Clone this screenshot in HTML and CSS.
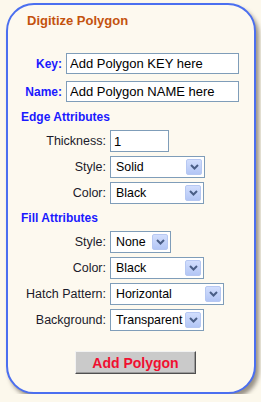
FILE: index.html
```html
<!DOCTYPE html>
<html lang="en">
<head>
<meta charset="UTF-8">
<meta name="viewport" content="width=device-width, initial-scale=1.0">
<link rel="stylesheet" href="styles.css">
</head>
<body>
  <div class="panel">
    <div class="title">Digitize Polygon</div>

    <!-- key / name -->
    <div class="key-grid">
      <label class="key-label">Key:</label>
      <input class="text-input wide" type="text" value="Add Polygon KEY here">
      <label class="key-label">Name:</label>
      <input class="text-input wide" type="text" value="Add Polygon NAME here">
    </div>

    <div class="section-head edge-head">Edge Attributes</div>
    <div class="attr-grid">
      <label class="attr-label">Thickness:</label>
      <input class="text-input thick" type="text" value="1">

      <label class="attr-label">Style:</label>
      <div class="select w-95">
        <span class="select-text">Solid</span>
        <span class="select-arrow"><svg width="9" height="6" viewBox="0 0 9 6"><path d="M1 1 L4.5 4.5 L8 1" fill="none" stroke="#4a5e86" stroke-width="2"/></svg></span>
      </div>

      <label class="attr-label">Color:</label>
      <div class="select w-94">
        <span class="select-text">Black</span>
        <span class="select-arrow"><svg width="9" height="6" viewBox="0 0 9 6"><path d="M1 1 L4.5 4.5 L8 1" fill="none" stroke="#4a5e86" stroke-width="2"/></svg></span>
      </div>
    </div>

    <div class="section-head fill-head">Fill Attributes</div>
    <div class="attr-grid">
      <label class="attr-label">Style:</label>
      <div class="select w-61">
        <span class="select-text">None</span>
        <span class="select-arrow"><svg width="9" height="6" viewBox="0 0 9 6"><path d="M1 1 L4.5 4.5 L8 1" fill="none" stroke="#4a5e86" stroke-width="2"/></svg></span>
      </div>

      <label class="attr-label">Color:</label>
      <div class="select w-94">
        <span class="select-text">Black</span>
        <span class="select-arrow"><svg width="9" height="6" viewBox="0 0 9 6"><path d="M1 1 L4.5 4.5 L8 1" fill="none" stroke="#4a5e86" stroke-width="2"/></svg></span>
      </div>

      <label class="attr-label">Hatch Pattern:</label>
      <div class="select w-114">
        <span class="select-text">Horizontal</span>
        <span class="select-arrow"><svg width="9" height="6" viewBox="0 0 9 6"><path d="M1 1 L4.5 4.5 L8 1" fill="none" stroke="#4a5e86" stroke-width="2"/></svg></span>
      </div>

      <label class="attr-label">Background:</label>
      <div class="select w-94">
        <span class="select-text">Transparent</span>
        <span class="select-arrow"><svg width="9" height="6" viewBox="0 0 9 6"><path d="M1 1 L4.5 4.5 L8 1" fill="none" stroke="#4a5e86" stroke-width="2"/></svg></span>
      </div>
    </div>

    <button class="add-btn">Add Polygon</button>
  </div>
</body>
</html>
```

FILE: styles.css
```css
body {
  margin: 0;
  background: #fcf8ec;
  font-family: "Liberation Sans", Arial, sans-serif;
}

/* rounded card */
.panel {
  width: 246px;
  height: 387px;
  margin: 3px 0 0 6px;
  border: 2px solid #4b6ff0;
  border-radius: 28px;
  background: #fdf9ef;
  box-shadow: 3px 4px 4px rgba(70, 60, 50, 0.55);
}

.title {
  margin: 8px 0 0 19px;
  font-size: 13px;
  line-height: 16px;
  font-weight: bold;
  color: #c4520e;
}

.key-grid {
  display: grid;
  grid-template-columns: 54px 173px;
  column-gap: 4px;
  row-gap: 7px;
  margin-top: 24px;
}

.key-label {
  align-self: center;
  text-align: right;
  font-size: 12px;
  font-weight: bold;
  color: #1a1aff;
}

.section-head {
  padding-left: 13px;
  font-size: 12px;
  line-height: 15px;
  font-weight: bold;
  color: #1a1aff;
}
.edge-head {
  margin: 8px 0 5px;
}
.fill-head {
  margin: 7px 0 5px;
}

.attr-grid {
  display: grid;
  grid-template-columns: 98px auto;
  column-gap: 4px;
  row-gap: 4px;
  justify-items: start;
}

.attr-label {
  justify-self: end;
  align-self: center;
  font-size: 12.5px;
  color: #1b1b2b;
}

.text-input {
  box-sizing: border-box;
  height: 21px;
  margin: 0;
  padding: 0 3px;
  border: 1px solid #7f9db9;
  background: #fff;
  font-family: "Liberation Sans", Arial, sans-serif;
  font-size: 13px;
  color: #000;
  outline: none;
}
.wide {
  width: 173px;
}
.thick {
  width: 59px;
  height: 22px;
}

/* XP style dropdowns */
.select {
  box-sizing: border-box;
  display: flex;
  align-items: center;
  height: 22px;
  padding: 2px;
  border: 1px solid #7f9db9;
  background: #fff;
}
.w-61 { width: 61px; }
.w-94 { width: 94px; }
.w-95 { width: 95px; }
.w-114 { width: 114px; }

.select-text {
  flex: 1;
  overflow: hidden;
  padding-left: 3px;
  font-size: 12.4px;
  color: #000;
  white-space: nowrap;
}

.select-arrow {
  box-sizing: border-box;
  display: flex;
  flex: none;
  align-items: center;
  justify-content: center;
  width: 16px;
  height: 16px;
  border: 1px solid #b7c8f2;
  border-radius: 2px;
  background: linear-gradient(#d2defd, #b3c6f5);
}

.add-btn {
  box-sizing: border-box;
  display: block;
  width: 121px;
  height: 23px;
  margin: 20px 0 0 67px;
  padding: 0;
  border: 1px solid;
  border-color: #f2f2f2 #505050 #505050 #f2f2f2;
  box-shadow: inset -1px -1px 0 #9a9a9a;
  background: #cacaca;
  font-family: "Liberation Sans", Arial, sans-serif;
  font-size: 14px;
  font-weight: bold;
  color: #f01030;
}
```
